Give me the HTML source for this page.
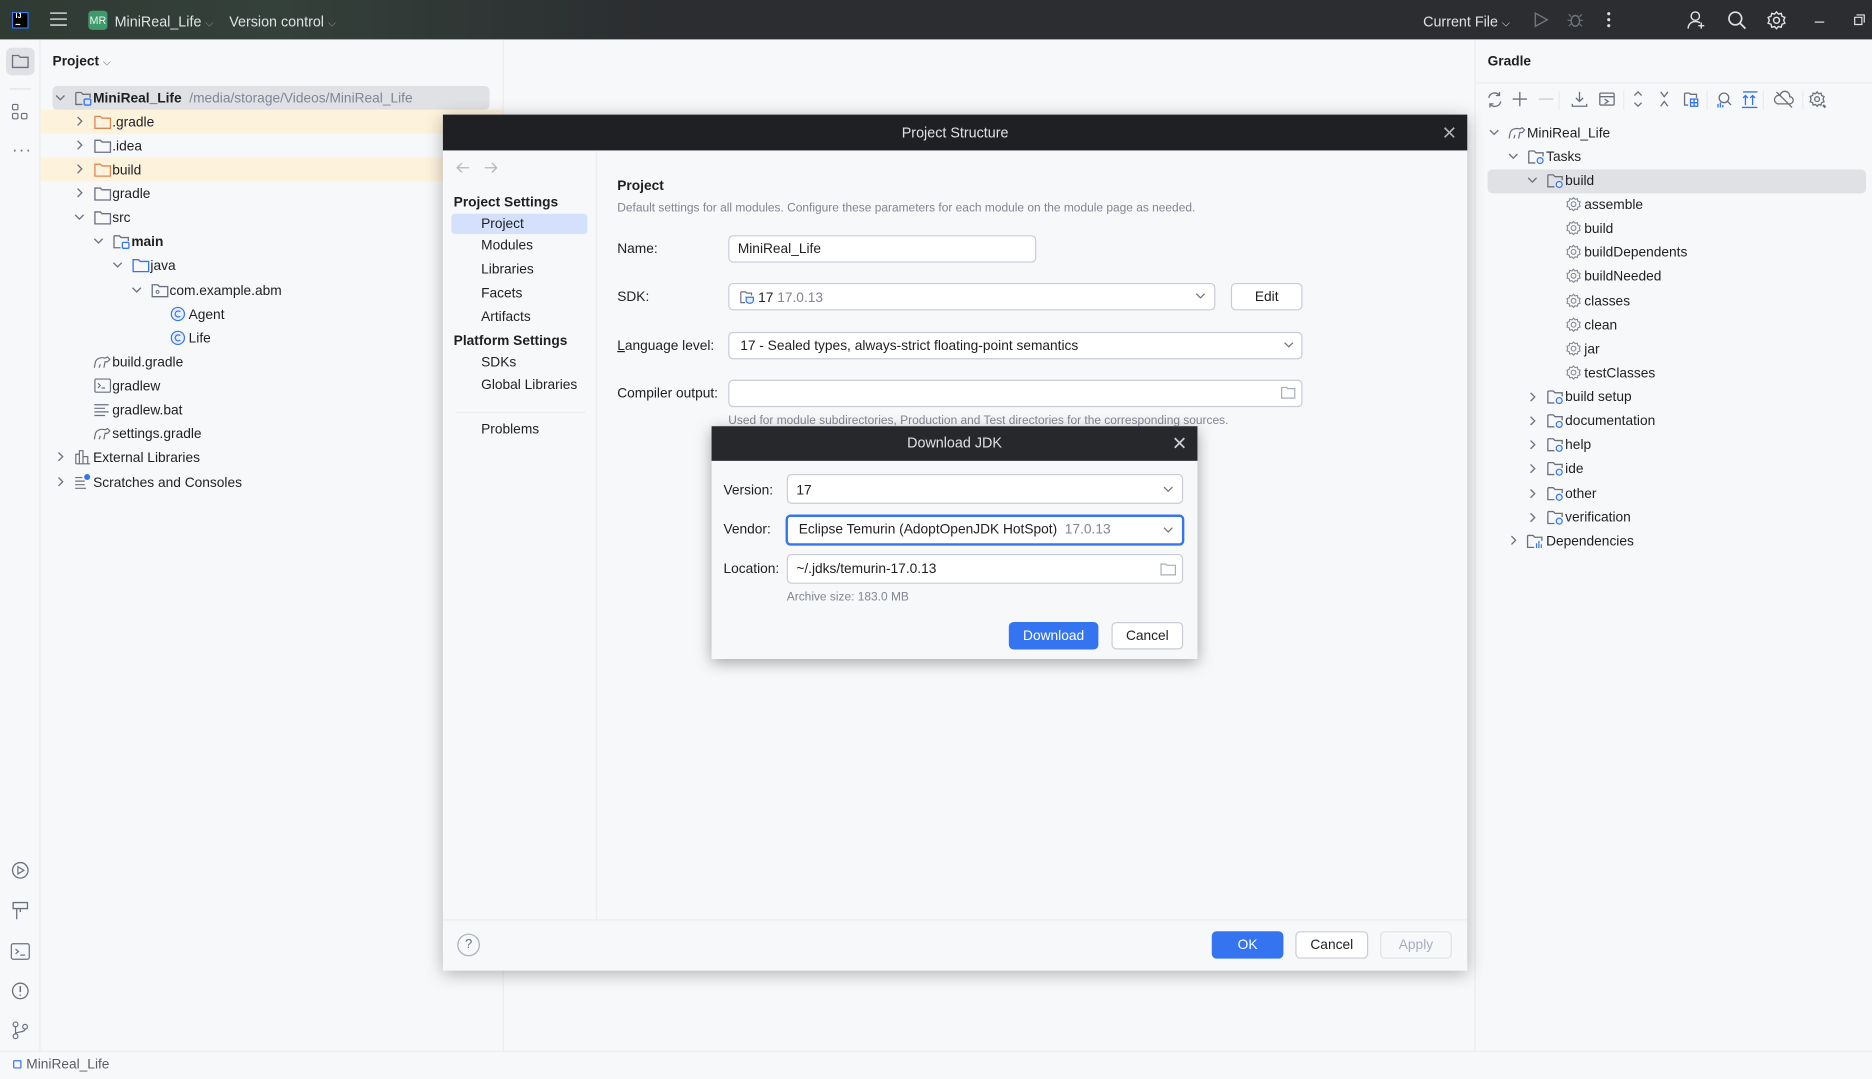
<!DOCTYPE html>
<html><head><meta charset="utf-8"><style>
*{box-sizing:border-box;margin:0;padding:0}
html,body{width:1872px;height:1079px;overflow:hidden;background:#f7f8fa}
#w{position:absolute;left:0;top:0;width:1568px;height:904px;transform:scale(1.19388);transform-origin:0 0;font-family:"Liberation Sans",sans-serif;font-size:11.5px;color:#1e1f22;background:#f7f8fa}
.a{position:absolute}
.t{position:absolute;white-space:nowrap;height:20px;line-height:20px;margin-top:1px}
svg{position:absolute;overflow:visible}
.inp{position:absolute;background:#fff;border:1px solid #c9ccd6;border-radius:4px}
.btn{position:absolute;border:1px solid #c9ccd6;border-radius:4px;background:#fff;text-align:center;line-height:21px;font-size:11.5px}
.g{color:#818594}
</style></head><body><div id="w">

<div class="a" style="left:0;top:0;width:1568px;height:33px;background:linear-gradient(90deg,#2f3a33 0%,#34403a 15%,#2b2d30 35%,#2b2d30 100%)"></div>
<div class="a" style="left:10px;top:10px;width:14px;height:14px;background:#000;border:1px solid #3d7cf5"></div>
<div class="a" style="left:13px;top:11px;color:#fff;font-size:6px;font-weight:bold">IJ</div>
<div class="a" style="left:13px;top:20px;width:4px;height:1px;background:#fff"></div>
<svg style="left:42px;top:10px" width="14" height="12"><path d="M0 1h14M0 6h14M0 11h14" stroke="#ced0d6" stroke-width="1.3"/></svg>
<div class="a" style="left:74px;top:9px;width:16px;height:16px;background:#3e9a6c;border-radius:3px;color:#e8f5ee;font-size:9px;line-height:16px;text-align:center">MR</div>
<div class="t" style="left:96px;top:7px;color:#dfe1e5;font-size:12px">MiniReal_Life <span style="color:#8c8f96;font-size:9px">⌵</span></div>
<div class="t" style="left:192px;top:7px;color:#dfe1e5;font-size:12px">Version control <span style="color:#8c8f96;font-size:9px">⌵</span></div>
<div class="t" style="left:1192px;top:7px;color:#dfe1e5;font-size:12px">Current File <span style="font-size:9px">⌵</span></div>
<svg style="left:1285px;top:10px" width="12" height="13"><path d="M1 1l10 5.5L1 12z" fill="none" stroke="#6f737a" stroke-width="1.2"/></svg>
<svg style="left:1313px;top:10px" width="13" height="13"><ellipse cx="6.5" cy="7.5" rx="3.5" ry="4.5" fill="none" stroke="#6f737a" stroke-width="1.2"/><path d="M0 7h3M10 7h3M1 2l2 2M12 2l-2 2M1 12l2-2M12 12l-2-2" stroke="#6f737a"/></svg>
<svg style="left:1346px;top:10px" width="3" height="13"><circle cx="1.5" cy="1.5" r="1.3" fill="#dfe1e5"/><circle cx="1.5" cy="6.5" r="1.3" fill="#dfe1e5"/><circle cx="1.5" cy="11.5" r="1.3" fill="#dfe1e5"/></svg>
<svg style="left:1413px;top:9px" width="16" height="16"><circle cx="7" cy="4.5" r="3.5" fill="none" stroke="#dfe1e5" stroke-width="1.2"/><path d="M1 15c0-4 3-6 6-6 2 0 3 .5 4 1M12 10v5M9.5 12.5h5" fill="none" stroke="#dfe1e5" stroke-width="1.2"/></svg>
<svg style="left:1447px;top:9px" width="16" height="16"><circle cx="6.5" cy="6.5" r="5.3" fill="none" stroke="#dfe1e5" stroke-width="1.4"/><path d="M10.5 10.5l4.5 4.5" stroke="#dfe1e5" stroke-width="1.5"/></svg>
<svg style="left:1480px;top:9px" width="16" height="16"><circle cx="8" cy="8" r="2.5" fill="none" stroke="#dfe1e5" stroke-width="1.2"/><path d="M8 1l1.6 1.8 2.4-.6.6 2.4 2.4 1L14 8l1 2.4-2.4.9-.6 2.5-2.4-.6L8 15l-1.6-1.8-2.4.6-.6-2.5-2.4-.9L2 8 1 5.6l2.4-1 .6-2.4 2.4.6z" fill="none" stroke="#dfe1e5" stroke-width="1.2"/></svg>
<div class="a" style="left:1520px;top:18px;width:8px;height:1px;background:#dfe1e5"></div>
<svg style="left:1553px;top:12px" width="9" height="9"><path d="M2 .5h6.5V7M.5 2.5h6v6h-6z" fill="none" stroke="#dfe1e5"/></svg>

<div class="a" style="left:0;top:33px;width:34px;height:847px;border-right:1px solid #ebecf0"></div>
<div class="a" style="left:5px;top:40px;width:24px;height:23px;background:#dfe1e5;border-radius:5px"></div>
<svg style="left:10px;top:45px" width="14" height="12"><path d="M.5 1.5h5l1.5 1.5h6.5v8.5H.5z" fill="none" stroke="#6c707e" stroke-width="1.1"/></svg>
<div class="a" style="left:8px;top:74px;width:18px;height:1px;background:#dfe1e5"></div>
<svg style="left:10px;top:87px" width="14" height="14"><rect x=".5" y=".5" width="4.5" height="4.5" rx="1" fill="none" stroke="#6c707e"/><rect x=".5" y="8" width="4.5" height="4.5" rx="1" fill="none" stroke="#6c707e"/><rect x="8" y="8" width="4.5" height="4.5" rx="1" fill="none" stroke="#6c707e"/></svg>
<div class="a" style="left:10px;top:120px;color:#6c707e;font-size:14px;letter-spacing:1px;line-height:10px">···</div>
<svg style="left:9px;top:721px" width="16" height="16"><circle cx="8" cy="8" r="6.5" fill="none" stroke="#6c707e" stroke-width="1.1"/><path d="M6 5l5 3-5 3z" fill="none" stroke="#6c707e"/></svg>
<svg style="left:9px;top:755px" width="16" height="16"><path d="M2 1h12v5H2zM5 6v9M8 6v3" fill="none" stroke="#6c707e" stroke-width="1.1"/></svg>
<svg style="left:9px;top:789px" width="16" height="16"><rect x=".5" y="1.5" width="15" height="13" rx="1.5" fill="none" stroke="#6c707e"/><path d="M4 6l2.5 2L4 10M8 11h4" fill="none" stroke="#6c707e"/></svg>
<svg style="left:9px;top:822px" width="16" height="16"><circle cx="8" cy="8" r="6.5" fill="none" stroke="#6c707e" stroke-width="1.1"/><path d="M8 4v5M8 11v1" stroke="#6c707e" stroke-width="1.3"/></svg>
<svg style="left:9px;top:855px" width="16" height="16"><circle cx="4" cy="3" r="2" fill="none" stroke="#6c707e"/><circle cx="4" cy="13" r="2" fill="none" stroke="#6c707e"/><circle cx="12" cy="5" r="2" fill="none" stroke="#6c707e"/><path d="M4 5v6M12 7c0 3-8 2-8 4" fill="none" stroke="#6c707e"/></svg>

<div class="a" style="left:421px;top:33px;width:1px;height:847px;background:#ebecf0"></div>
<div class="t" style="left:44px;top:41px;font-weight:bold;font-size:11.5px">Project <span style="font-weight:normal;color:#6c707e;font-size:9px">⌵</span></div>
<div class="a" style="left:44px;top:72px;width:366px;height:20px;background:#dfe1e5;border-radius:4px"></div>
<div class="a" style="left:34px;top:92px;width:387px;height:20px;background:#fdf2dc"></div>
<div class="a" style="left:34px;top:132px;width:387px;height:20px;background:#fdf2dc"></div>

<svg width="0" height="0"><defs>
<path id="chd" d="M0 0l3.5 3.5L7 0" fill="none" stroke="#6c707e" stroke-width="1.1"/>
<path id="chr" d="M0 0l3.5 3.5L0 7" fill="none" stroke="#6c707e" stroke-width="1.1"/>
<path id="fold" d="M.5 1.5h4.5l1.5 1.5h7v8.5H.5z" fill="none" stroke-width="1.1"/>
</defs></svg>

<svg style="left:47px;top:80px" width="8" height="5"><use href="#chd"/></svg>
<svg style="left:63px;top:76px" width="16" height="14"><path d="M.5 1.5h4.5l1.5 1.5h6v3M6 11.5H.5v-10" fill="none" stroke="#6c707e" stroke-width="1.1"/><rect x="7.5" y="7" width="5.5" height="5" rx="1" fill="none" stroke="#3574f0" stroke-width="1.1"/></svg>
<div class="t" style="left:78px;top:72px"><b>MiniReal_Life</b> &nbsp;<span class="g">/media/storage/Videos/MiniReal_Life</span></div>

<svg style="left:65px;top:98px" width="5" height="8"><use href="#chr"/></svg>
<svg style="left:79px;top:96px" width="14" height="12"><use href="#fold" stroke="#e08855"/></svg>
<div class="t" style="left:94px;top:92px">.gradle</div>
<svg style="left:65px;top:118px" width="5" height="8"><use href="#chr"/></svg>
<svg style="left:79px;top:116px" width="14" height="12"><use href="#fold" stroke="#6c707e"/></svg>
<div class="t" style="left:94px;top:112px">.idea</div>
<svg style="left:65px;top:138px" width="5" height="8"><use href="#chr"/></svg>
<svg style="left:79px;top:136px" width="14" height="12"><use href="#fold" stroke="#e08855"/></svg>
<div class="t" style="left:94px;top:132px">build</div>
<svg style="left:65px;top:158px" width="5" height="8"><use href="#chr"/></svg>
<svg style="left:79px;top:156px" width="14" height="12"><use href="#fold" stroke="#6c707e"/></svg>
<div class="t" style="left:94px;top:152px">gradle</div>
<svg style="left:63px;top:180px" width="8" height="5"><use href="#chd"/></svg>
<svg style="left:79px;top:176px" width="14" height="12"><use href="#fold" stroke="#6c707e"/></svg>
<div class="t" style="left:94px;top:172px">src</div>
<svg style="left:79px;top:200px" width="8" height="5"><use href="#chd"/></svg>
<svg style="left:95px;top:196px" width="16" height="14"><path d="M.5 1.5h4.5l1.5 1.5h6v3M6 11.5H.5v-10" fill="none" stroke="#6c707e" stroke-width="1.1"/><rect x="7.5" y="7" width="5.5" height="5" rx="1" fill="none" stroke="#3574f0" stroke-width="1.1"/></svg>
<div class="t" style="left:110px;top:192px;font-weight:bold">main</div>
<svg style="left:95px;top:220px" width="8" height="5"><use href="#chd"/></svg>
<svg style="left:111px;top:216px" width="14" height="12"><use href="#fold" stroke="#3574f0"/></svg>
<div class="t" style="left:126px;top:212px">java</div>
<svg style="left:111px;top:241px" width="8" height="5"><use href="#chd"/></svg>
<svg style="left:127px;top:237px" width="14" height="12"><use href="#fold" stroke="#6c707e"/><circle cx="5" cy="7.5" r="1.2" fill="none" stroke="#6c707e" stroke-width=".8"/></svg>
<div class="t" style="left:142px;top:233px">com.example.abm</div>
<svg style="left:143px;top:257px" width="12" height="12"><circle cx="6" cy="6" r="5.5" fill="#e7effd" stroke="#3574f0"/><path d="M8 4.2A2.5 2.5 0 1 0 8 7.8" fill="none" stroke="#3574f0"/></svg>
<div class="t" style="left:158px;top:253px">Agent</div>
<svg style="left:143px;top:277px" width="12" height="12"><circle cx="6" cy="6" r="5.5" fill="#e7effd" stroke="#3574f0"/><path d="M8 4.2A2.5 2.5 0 1 0 8 7.8" fill="none" stroke="#3574f0"/></svg>
<div class="t" style="left:158px;top:273px">Life</div>
<svg style="left:78px;top:297px" width="15" height="12"><path d="M1 11l1-5c1-3 5-4 8-3l2-1 2 2-2 2-2 0-1 5M5 11l1-3" fill="none" stroke="#6c707e"/></svg>
<div class="t" style="left:94px;top:293px">build.gradle</div>
<svg style="left:79px;top:317px" width="14" height="12"><rect x=".5" y=".5" width="13" height="11" rx="1" fill="none" stroke="#6c707e"/><path d="M3 4l2 2-2 2M6 8h3" fill="none" stroke="#6c707e"/></svg>
<div class="t" style="left:94px;top:313px">gradlew</div>
<svg style="left:79px;top:338px" width="12" height="10"><path d="M0 1h12M0 4h9M0 7h12M0 10h9" stroke="#6c707e"/></svg>
<div class="t" style="left:94px;top:333px">gradlew.bat</div>
<svg style="left:78px;top:357px" width="15" height="12"><path d="M1 11l1-5c1-3 5-4 8-3l2-1 2 2-2 2-2 0-1 5M5 11l1-3" fill="none" stroke="#6c707e"/></svg>
<div class="t" style="left:94px;top:353px">settings.gradle</div>
<svg style="left:49px;top:379px" width="5" height="8"><use href="#chr"/></svg>
<svg style="left:63px;top:377px" width="13" height="12"><path d="M.5 11.5h12M.5 11.5V3.5h3v8M3.5 11.5V.5h3v11M6.5 11.5V5.5h4v6" fill="none" stroke="#6c707e"/></svg>
<div class="t" style="left:78px;top:373px">External Libraries</div>
<svg style="left:49px;top:400px" width="5" height="8"><use href="#chr"/></svg>
<svg style="left:63px;top:397px" width="13" height="12"><path d="M0 3h6M0 6h8M0 9h8M0 12h9" stroke="#6c707e"/><circle cx="10" cy="2.5" r="2.5" fill="#3574f0"/></svg>
<div class="t" style="left:78px;top:394px">Scratches and Consoles</div>

<div class="a" style="left:1235px;top:33px;width:1px;height:847px;background:#ebecf0"></div>
<div class="t" style="left:1246px;top:41px;font-weight:bold">Gradle</div>
<div class="a" style="left:1236px;top:69px;width:332px;height:1px;background:#ebecf0"></div>
<svg style="left:1245px;top:76px" width="300" height="16" fill="none" stroke="#6c707e" stroke-width="1.1">
<path d="M2 6a5 5 0 0 1 9-2M12 9a5 5 0 0 1-9 2M11 1v3H8M3 14v-3h3"/>
<path d="M28 1v12M22 7h12"/>
<path d="M44 7h12" stroke="#c9ccd6"/>
<path d="M61 0v16" stroke="#ebecf0"/>
<path d="M78 1v8M75 6l3 3 3-3M72 11v2h12v-2"/>
<rect x="95" y="2" width="12" height="10" rx="1"/><path d="M95 5h12M99 7l3 2-3 2"/>
<path d="M115 0v16" stroke="#ebecf0"/>
<path d="M124 4l3-3 3 3M124 10l3 3 3-3"/>
<path d="M146 1l3 4 3-4M146 13l3-4 3 4"/>
<path d="M166 2h4l1 1h5v3M166 2v10h3"/><rect x="171" y="7" width="6" height="6" stroke="#3574f0"/><path d="M174 7v6M171 10h6" stroke="#3574f0"/>
<path d="M185 0v16" stroke="#ebecf0"/>
<circle cx="199" cy="6" r="4"/><path d="M202 9l3 3"/><path d="M194 11v3M196 10v4M198 12v2" stroke="#3574f0"/>
<path d="M214 14h13M215 1h12M217 12V4M215 6l2-2 2 2M223 12V4M221 6l2-2 2 2" stroke="#3574f0"/>
<path d="M232 0v16" stroke="#ebecf0"/>
<path d="M244 11h10a3 3 0 0 0 0-6 4 4 0 0 0-8-1 3 3 0 0 0-2 7zM243 1l13 13"/>
<path d="M265 0v16" stroke="#ebecf0"/>
<circle cx="277" cy="7" r="2"/><path d="M277 1l1.3 1.5 2-.5.5 2 2 .8-.8 2.2.8 2.2-2 .8-.5 2-2-.5L277 13l-1.3-1.5-2 .5-.5-2-2-.8.8-2.2-.8-2.2 2-.8.5-2 2 .5z"/><path d="M282 12l2 2" stroke-width="2"/>
</svg>
<div class="a" style="left:1246px;top:142px;width:317px;height:20px;background:#dfe1e5;border-radius:4px"></div>
<svg style="left:1248px;top:109px" width="8" height="5"><use href="#chd"/></svg>
<svg style="left:1263px;top:105px" width="15" height="12"><path d="M1 11l1-5c1-3 5-4 8-3l2-1 2 2-2 2-2 0-1 5M5 11l1-3" fill="none" stroke="#6c707e"/></svg>
<div class="t" style="left:1279px;top:101px">MiniReal_Life</div>
<svg style="left:1264px;top:129px" width="8" height="5"><use href="#chd"/></svg>
<div class="t" style="left:1295px;top:121px">Tasks</div>
<svg style="left:1280px;top:149px" width="8" height="5"><use href="#chd"/></svg>
<div class="t" style="left:1311px;top:141px">build</div>
<div class="t" style="left:1327px;top:161px">assemble</div>
<div class="t" style="left:1327px;top:181px">build</div>
<div class="t" style="left:1327px;top:201px">buildDependents</div>
<div class="t" style="left:1327px;top:221px">buildNeeded</div>
<div class="t" style="left:1327px;top:242px">classes</div>
<div class="t" style="left:1327px;top:262px">clean</div>
<div class="t" style="left:1327px;top:282px">jar</div>
<div class="t" style="left:1327px;top:302px">testClasses</div>
<div class="t" style="left:1311px;top:322px">build setup</div>
<div class="t" style="left:1311px;top:342px">documentation</div>
<div class="t" style="left:1311px;top:362px">help</div>
<div class="t" style="left:1311px;top:382px">ide</div>
<div class="t" style="left:1311px;top:403px">other</div>
<div class="t" style="left:1311px;top:423px">verification</div>
<svg style="left:1266px;top:449px" width="5" height="8"><use href="#chr"/></svg>
<svg style="left:1279px;top:447px" width="16" height="14"><path d="M.5 1.5h4.5l1.5 1.5h6v3M6 11.5H.5v-10" fill="none" stroke="#6c707e" stroke-width="1.1"/><path d="M8 12V8M10 12V6M12 12V9" stroke="#3574f0"/></svg>
<div class="t" style="left:1295px;top:443px">Dependencies</div>
<svg style="left:0;top:0" width="1568" height="904">
<defs>
<g id="gf"><path d="M.5 1.5h4.5l1.5 1.5h6v3M6 11.5H.5v-10" fill="none" stroke="#6c707e" stroke-width="1.1"/><circle cx="10" cy="9.5" r="2.5" fill="#e7effd" stroke="#3574f0"/></g>
<g id="gr"><circle cx="6" cy="6" r="2" fill="none" stroke="#818594" stroke-width=".9"/><path d="M6 .5l1.3 1.4 1.9-.4.4 1.9 1.9.7-.6 1.9.6 1.9-1.9.7-.4 1.9-1.9-.4L6 11.5 4.7 10.1l-1.9.4-.4-1.9L.5 7.9 1.1 6 .5 4.1l1.9-.7.4-1.9 1.9.4z" fill="none" stroke="#818594" stroke-width=".9"/></g>
</defs>
<use href="#gf" x="1280" y="125"/><use href="#gf" x="1296" y="145"/>
<use href="#gr" x="1312" y="165"/><use href="#gr" x="1312" y="185"/><use href="#gr" x="1312" y="205"/><use href="#gr" x="1312" y="225"/><use href="#gr" x="1312" y="246"/><use href="#gr" x="1312" y="266"/><use href="#gr" x="1312" y="286"/><use href="#gr" x="1312" y="306"/>
<use href="#gf" x="1296" y="326"/><use href="#gf" x="1296" y="346"/><use href="#gf" x="1296" y="366"/><use href="#gf" x="1296" y="386"/><use href="#gf" x="1296" y="407"/><use href="#gf" x="1296" y="427"/>
<g fill="none" stroke="#6c707e" stroke-width="1.1"><path d="M1282 329l3.5 3.5-3.5 3.5M1282 349l3.5 3.5-3.5 3.5M1282 369l3.5 3.5-3.5 3.5M1282 389l3.5 3.5-3.5 3.5M1282 410l3.5 3.5-3.5 3.5M1282 430l3.5 3.5-3.5 3.5"/></g>
</svg>

<div class="a" style="left:0;top:880px;width:1568px;height:1px;background:#ebecf0"></div>
<div class="a" style="left:11px;top:888px;width:7px;height:7px;border:1px solid #3574f0;border-radius:1px"></div>
<div class="t" style="left:22px;top:881px;color:#5a5d63">MiniReal_Life</div>

<div class="a" style="left:371px;top:96px;width:858px;height:717px;background:#f7f8fa;box-shadow:0 3px 14px rgba(0,0,0,.3)"></div>
<div class="a" style="left:371px;top:96px;width:858px;height:30px;background:#1f2023"></div>
<div class="t" style="left:371px;width:858px;top:100px;text-align:center;color:#dfe1e5;font-size:12px">Project Structure</div>
<svg style="left:1210px;top:107px" width="8" height="8"><path d="M0 0l8 8M8 0L0 8" stroke="#b0b3b8" stroke-width="1.4"/></svg>
<div class="a" style="left:499px;top:126px;width:1px;height:644px;background:#ebecf0"></div>
<div class="a" style="left:371px;top:770px;width:858px;height:1px;background:#ebecf0"></div>
<svg style="left:382px;top:136px" width="36" height="9" fill="none" stroke="#b4b8bf" stroke-width="1.1"><path d="M1 4.5h10M5 .5l-4 4 4 4M24 4.5h10M30 .5l4 4-4 4"/></svg>
<div class="t" style="left:380px;top:159px;font-weight:bold">Project Settings</div>
<div class="a" style="left:378px;top:179px;width:114px;height:17px;background:#d5e1fc;border-radius:3px"></div>
<div class="t" style="left:403px;top:177px">Project</div>
<div class="t" style="left:403px;top:195px">Modules</div>
<div class="t" style="left:403px;top:215px">Libraries</div>
<div class="t" style="left:403px;top:235px">Facets</div>
<div class="t" style="left:403px;top:255px">Artifacts</div>
<div class="t" style="left:380px;top:275px;font-weight:bold">Platform Settings</div>
<div class="t" style="left:403px;top:293px">SDKs</div>
<div class="t" style="left:403px;top:312px">Global Libraries</div>
<div class="a" style="left:382px;top:345px;width:108px;height:1px;background:#ebecf0"></div>
<div class="t" style="left:403px;top:349px">Problems</div>

<div class="t" style="left:517px;top:145px;font-weight:bold">Project</div>
<div class="t g" style="left:517px;top:164px;font-size:10px">Default settings for all modules. Configure these parameters for each module on the module page as needed.</div>
<div class="t" style="left:517px;top:198px">Name:</div>
<div class="inp" style="left:610px;top:197px;width:258px;height:23px"></div>
<div class="t" style="left:618px;top:198px">MiniReal_Life</div>
<div class="t" style="left:517px;top:238px">SDK:</div>
<div class="inp" style="left:610px;top:237px;width:408px;height:23px"></div>
<svg style="left:620px;top:243px" width="12" height="12"><path d="M.5 1.5h4l1 1h4v2M4 10.5H.5v-9" fill="none" stroke="#6c707e"/><path d="M5 6h6v3a3 2 0 0 1-6 0z" fill="#e7effd" stroke="#3574f0"/></svg>
<div class="t" style="left:635px;top:239px">17 <span class="g">17.0.13</span></div>
<svg style="left:1002px;top:246px" width="7" height="4"><path d="M0 0l3.5 3.5L7 0" fill="none" stroke="#6c707e"/></svg>
<div class="btn" style="left:1031px;top:237px;width:60px;height:23px;padding-top:1px">Edit</div>
<div class="t" style="left:517px;top:279px"><u>L</u>anguage level:</div>
<div class="inp" style="left:610px;top:278px;width:481px;height:23px"></div>
<div class="t" style="left:620px;top:279px">17 - Sealed types, always-strict floating-point semantics</div>
<svg style="left:1076px;top:287px" width="7" height="4"><path d="M0 0l3.5 3.5L7 0" fill="none" stroke="#6c707e"/></svg>
<div class="t" style="left:517px;top:319px">Compiler output:</div>
<div class="inp" style="left:610px;top:318px;width:481px;height:23px"></div>
<svg style="left:1073px;top:323px" width="12" height="11"><path d="M.5 1.5h4l1 1h6v8H.5z" fill="none" stroke="#a8adbd"/></svg>
<div class="t g" style="left:610px;top:342px;font-size:10px">Used for module subdirectories, Production and Test directories for the corresponding sources.</div>

<div class="a" style="left:383px;top:782px;width:19px;height:19px;border:1px solid #a8adbd;border-radius:50%;text-align:center;line-height:17px;font-size:11px;color:#6c707e">?</div>
<div class="btn" style="left:1015px;top:780px;width:60px;height:23px;background:#3574f0;border-color:#3574f0;color:#fff;padding-top:1px">OK</div>
<div class="btn" style="left:1085px;top:780px;width:61px;height:23px;padding-top:1px">Cancel</div>
<div class="btn" style="left:1156px;top:780px;width:60px;height:23px;color:#a8adbd;border-color:#dfe1e5;background:#f7f8fa;padding-top:1px">Apply</div>

<div class="a" style="left:596px;top:357px;width:407px;height:195px;background:#f7f8fa;box-shadow:0 3px 12px rgba(0,0,0,.35)"></div>
<div class="a" style="left:596px;top:357px;width:407px;height:29px;background:#27282c"></div>
<div class="t" style="left:596px;width:407px;top:360px;text-align:center;color:#dfe1e5;font-size:12px">Download JDK</div>
<svg style="left:984px;top:367px" width="8" height="8"><path d="M0 0l8 8M8 0L0 8" stroke="#ced0d6" stroke-width="1.5"/></svg>
<div class="t" style="left:606px;top:400px">Version:</div>
<div class="inp" style="left:659px;top:397px;width:332px;height:25px"></div>
<div class="t" style="left:667px;top:400px">17</div>
<svg style="left:975px;top:408px" width="7" height="4"><path d="M0 0l3.5 3.5L7 0" fill="none" stroke="#6c707e"/></svg>
<div class="t" style="left:606px;top:433px">Vendor:</div>
<div class="inp" style="left:658px;top:431px;width:334px;height:26px;border:2px solid #3574f0"></div>
<div class="t" style="left:669px;top:433px">Eclipse Temurin (AdoptOpenJDK HotSpot) &nbsp;<span class="g">17.0.13</span></div>
<svg style="left:975px;top:442px" width="7" height="4"><path d="M0 0l3.5 3.5L7 0" fill="none" stroke="#6c707e"/></svg>
<div class="t" style="left:606px;top:466px">Location:</div>
<div class="inp" style="left:659px;top:464px;width:332px;height:25px"></div>
<div class="t" style="left:667px;top:466px">~/.jdks/temurin-17.0.13</div>
<svg style="left:972px;top:471px" width="13" height="11"><path d="M.5 1.5h4l1 1h7v8H.5z" fill="none" stroke="#a8adbd"/></svg>
<div class="t g" style="left:659px;top:490px;font-size:10px">Archive size: 183.0 MB</div>
<div class="btn" style="left:845px;top:521px;width:75px;height:23px;background:#3574f0;border-color:#3574f0;color:#fff;padding-top:1px">Download</div>
<div class="btn" style="left:931px;top:521px;width:60px;height:23px;padding-top:1px">Cancel</div>

</div></body></html>
